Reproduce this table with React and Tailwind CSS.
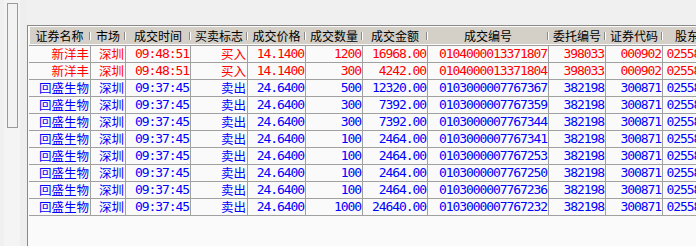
import React from 'react';

const columns = [
  { title: '证券名称', w: 'w-[62px]', cjk: true },
  { title: '市场', w: 'w-[35px]', cjk: true },
  { title: '成交时间', w: 'w-[65px]' },
  { title: '买卖标志', w: 'w-[57px]', cjk: true },
  { title: '成交价格', w: 'w-[58px]' },
  { title: '成交数量', w: 'w-[57px]' },
  { title: '成交金额', w: 'w-[65px]' },
  { title: '成交编号', w: 'w-[121px]' },
  { title: '委托编号', w: 'w-[57px]' },
  { title: '证券代码', w: 'w-[57px]' },
  { title: '股东代码', w: 'w-[73px]' },
];

const buy = ['新洋丰', '深圳', '09:48:51', '买入', '14.1400'];
const sell = ['回盛生物', '深圳', '09:37:45', '卖出', '24.6400'];

const rows = [
  { side: 'buy', cells: [...buy, '1200', '16968.00', '0104000013371807', '398033', '000902', '0255861734'] },
  { side: 'buy', cells: [...buy, '300', '4242.00', '0104000013371804', '398033', '000902', '0255861734'] },
  { side: 'sell', cells: [...sell, '500', '12320.00', '0103000007767367', '382198', '300871', '0255861734'] },
  { side: 'sell', cells: [...sell, '300', '7392.00', '0103000007767359', '382198', '300871', '0255861734'] },
  { side: 'sell', cells: [...sell, '300', '7392.00', '0103000007767344', '382198', '300871', '0255861734'] },
  { side: 'sell', cells: [...sell, '100', '2464.00', '0103000007767341', '382198', '300871', '0255861734'] },
  { side: 'sell', cells: [...sell, '100', '2464.00', '0103000007767253', '382198', '300871', '0255861734'] },
  { side: 'sell', cells: [...sell, '100', '2464.00', '0103000007767250', '382198', '300871', '0255861734'] },
  { side: 'sell', cells: [...sell, '100', '2464.00', '0103000007767236', '382198', '300871', '0255861734'] },
  { side: 'sell', cells: [...sell, '1000', '24640.00', '0103000007767232', '382198', '300871', '0255861734'] },
];

function HeaderCell({ col }) {
  return (
    <div className={`${col.w} shrink-0 h-full flex items-center`}>
      <div className="flex-1 text-center text-[12px] leading-[16px] text-black whitespace-nowrap">
        {col.title}
      </div>
      <div className="w-[1px] h-[8px] bg-[#8a8a8a]" />
      <div className="w-[1px] h-[8px] bg-white mr-[1px]" />
    </div>
  );
}

function Row({ row }) {
  const color = row.side === 'buy' ? 'text-[#ff0000]' : 'text-[#0000ff]';
  return (
    <div className={`flex h-[17px] border-b border-[#a0a0a0] ${color}`}>
      {row.cells.map((text, i) => (
        <div
          key={i}
          className={`${columns[i].w} shrink-0 h-full border-r border-[#a0a0a0] flex items-center justify-end pr-[1px] whitespace-nowrap`}
        >
          {columns[i].cjk ? (
            <span className="text-[12.5px] leading-[16px]">{text}</span>
          ) : (
            <span className="text-[13px] leading-[16px] tracking-[-1.08px] font-['DejaVu_Sans_Mono',monospace]">
              {text}
            </span>
          )}
        </div>
      ))}
    </div>
  );
}

export default function App() {
  return (
    <div className="w-[696px] h-[246px] overflow-hidden bg-[#f0f0f0] flex font-['Noto_Sans_CJK_SC',sans-serif]">
      {/* left strip with the small scroll bar */}
      <div className="w-[27px] shrink-0 flex">
        <div className="w-[4px]" />
        <div className="w-[16px] bg-[#f4f4f4] pt-[3px] pl-[3px]">
          <div className="w-[11px] h-[125px] border border-[#9a9a9a] bg-[#f3f3f3]" />
        </div>
        <div className="w-[7px] bg-[#eeeeee]" />
      </div>

      {/* trade list panel */}
      <div className="flex-1 min-w-0 pt-[25px] flex flex-col">
        <div className="flex-1 border-l border-t border-[#8a8a8a] bg-[#fafafa] pl-[1px] pt-[1px] overflow-hidden">
          <div className="w-max">
            <div className="flex h-[17px] bg-[#d4d0c8] ml-[1px]">
              {columns.map((col) => (
                <HeaderCell key={col.title} col={col} />
              ))}
            </div>
            <div className="h-[1px]" />
            <div className="border-t border-[#a0a0a0]">
              {rows.map((row, i) => (
                <Row key={i} row={row} />
              ))}
            </div>
          </div>
        </div>
      </div>
    </div>
  );
}
